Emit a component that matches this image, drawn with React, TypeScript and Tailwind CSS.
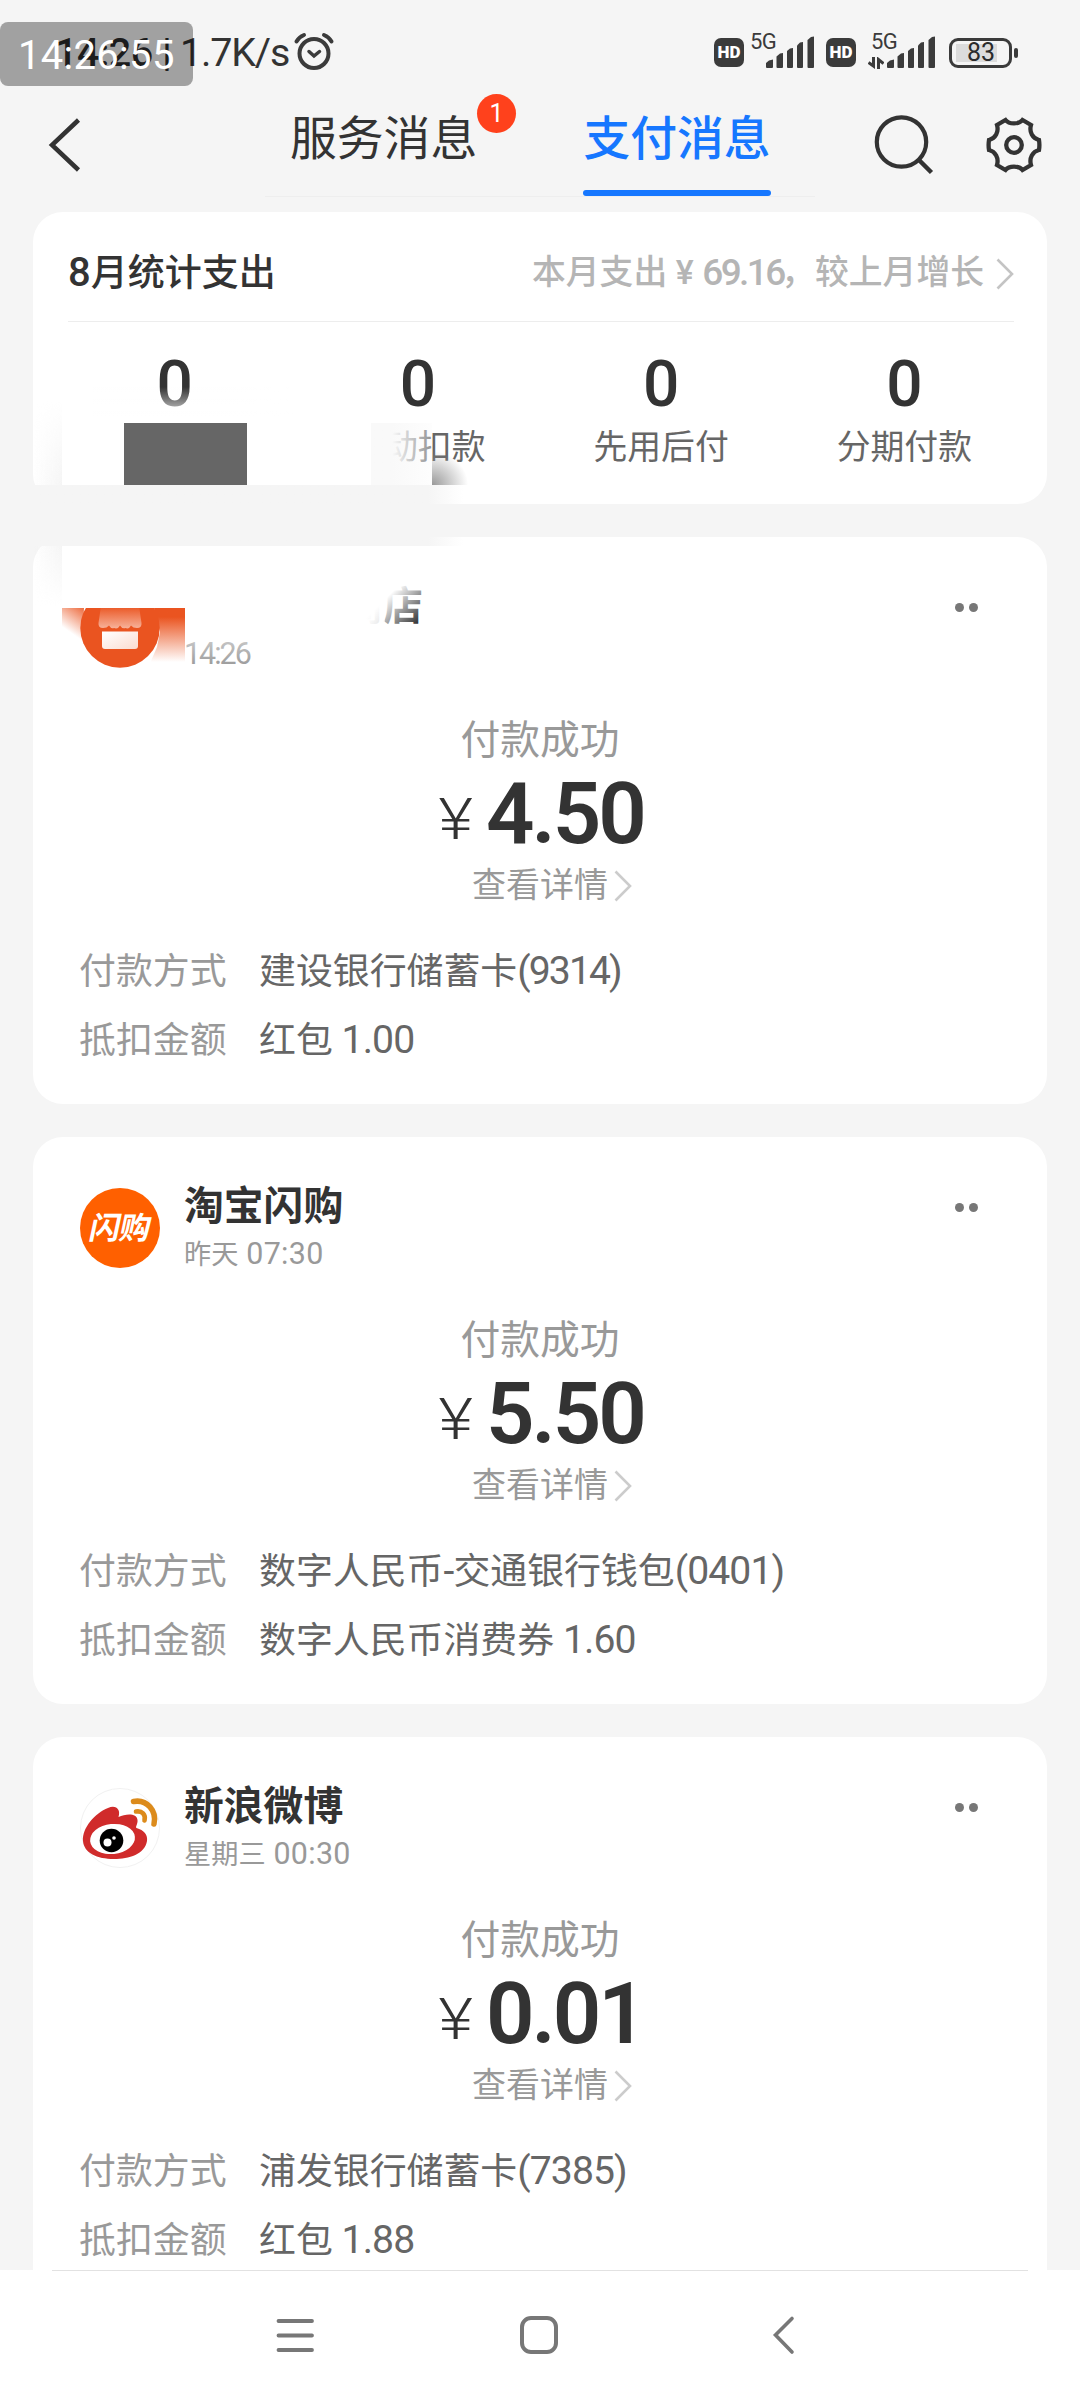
import React from "react";

const FONT = "font-['Roboto','Noto_Sans_CJK_SC',sans-serif]";

/* Splits a string into CJK and Latin runs so that the digits can be set a little larger. */
function Txt({ children, latin = "text-[1.08em]" }: { children: string; latin?: string }) {
  const runs = children.split(/([\x20-\x7e]+)/).filter(Boolean);
  return (
    <>
      {runs.map((r, i) =>
        /^[\x20-\x7e]+$/.test(r) ? (
          <span key={i} className={`${latin} whitespace-pre`}>{r}</span>
        ) : (
          <span key={i}>{r}</span>
        )
      )}
    </>
  );
}

function Signal() {
  return (
    <svg width="49" height="32" viewBox="0 0 49 32" className="block" fill="#3b3b3b">
      <path d="M0 31V27L3 24.5L7 23.5V31Q7 32 6 32H1Q0 32 0 31Z" />
      <path d="M10.5 31V20.5L14 17.5L17 17V31Q17 32 16 32H11.5Q10.5 32 10.5 31Z" />
      <path d="M21 31V15L24 12.5L27 12V31Q27 32 26 32H22Q21 32 21 31Z" />
      <path d="M31 31V9.500L34 6.500L37 6V31Q37 32 36 32H32Q31 32 31 31Z" />
      <path d="M41.500 31V4L45 1L48 .5V31Q48 32 47 32H42.500Q41.500 32 41.500 31Z" />
    </svg>
  );
}

function Hd() {
  return (
    <div className="flex h-[29px] w-[30px] items-center justify-center rounded-[7px] bg-[#3b3b3b] text-[17px] leading-none font-black text-white">
      HD
    </div>
  );
}

function StatusBar() {
  return (
    <div className="relative h-[90px] text-[#2b2b2b]">
      <div className="flex h-full items-start pl-[55px]">
        <div className="mt-[30px] w-[125px] text-[39.500px] leading-[46px] font-medium tracking-[-0.500px] whitespace-pre">14:26 |</div>
        <div className="mt-[30px] w-[113px] text-[39.500px] leading-[46px] tracking-[-1.200px] whitespace-pre text-[#333]">1.7K/s</div>
        <svg width="42" height="40" viewBox="0 0 42 40" className="mt-[31px]" fill="none" stroke="#3b3b3b" strokeLinecap="round">
          <circle cx="21" cy="22.500" r="14.500" strokeWidth="4" />
          <path d="M3.500 10.500Q6 6 11 4M31 4Q36 6 38.500 10.500" strokeWidth="4" />
          <path d="M16 20.500L21 25L26.500 20.500" strokeWidth="3.500" />
        </svg>
        <div className="mt-[38px] ml-[379px] flex">
          <Hd />
          <div className="-mt-[8px] ml-[6px] w-[16px] text-[22px] leading-[24px] tracking-[-0.500px] text-[#3b3b3b]">5G</div>
          <div className="-mt-[2px]"><Signal /></div>
          <div className="ml-[11px]"><Hd /></div>
          <div className="relative -mt-[8px] ml-[15px] w-[16px] text-[22px] leading-[24px] tracking-[-0.500px] text-[#3b3b3b]">
            5G
            <svg width="16" height="12" viewBox="0 0 16 12" className="absolute top-[27px] -left-[3px]" fill="none" stroke="#3b3b3b" strokeWidth="3">
              <path d="M0.500 5.500L5.500 9V0M10.500 12V2.500L15.500 6.500" />
            </svg>
          </div>
          <div className="-mt-[2px]"><Signal /></div>
          <div className="-mt-px ml-[13px] flex items-center">
            <div className="flex h-[30px] w-[63px] items-center rounded-[9px] border-[3px] border-[#3b3b3b] pl-[4px]">
              <div className="flex h-[18px] w-[41px] items-center justify-end bg-[#dcdcdc] pr-[2px] text-[25px] leading-none text-[#2b2b2b]">83</div>
            </div>
            <div className="ml-[2px] h-[10px] w-[4px] rounded-[2px] bg-[#3b3b3b]" />
          </div>
        </div>
      </div>
      <div className="absolute top-[22px] left-0 h-[64px] w-[193px] rounded-[8px] bg-black/34 pl-[18px] text-[40px] leading-[67px] tracking-[0.300px] text-white">
        14:26:55
      </div>
    </div>
  );
}

function Header() {
  return (
    <div className="flex h-[122px] items-start text-[46.800px] leading-[60px] text-[#333]">
      <svg width="40" height="60" viewBox="0 0 40 60" className="mt-[25px] ml-[44px]" fill="none" stroke="#333" strokeWidth="4.500">
        <path d="M34.500 5L8 30L34.500 55" />
      </svg>
      <div className="flex h-[107px] w-[550px] items-start border-b border-[#eee] ml-[181px]">
        <div className="relative mt-[19px] ml-[25px] w-[186px] whitespace-nowrap">
          服务消息
          <div className="absolute -top-[15px] left-[187px] flex h-[39px] w-[39px] items-center justify-center rounded-full bg-[#ff411c] text-[25px] leading-none text-white">1</div>
        </div>
        <div className="ml-[107px] h-[106px] w-[188px] pt-[19px] text-center font-medium whitespace-nowrap text-[#1677ff]">
          支付消息
          <div className="mt-[21px] h-[6px] rounded-full bg-[#1677ff]" />
        </div>
      </div>
      <svg width="64" height="64" viewBox="0 0 64 64" className="mt-[22px] ml-[56px]" fill="none" stroke="#333" strokeWidth="4.200">
        <circle cx="30.500" cy="30" r="24.700" />
        <path d="M47.500 47.500L60.500 60.500" strokeWidth="4.500" />
      </svg>
      <svg width="60" height="60" viewBox="-30 -30 60 60" className="mt-[25px] ml-[49px]" fill="none" stroke="#333" strokeWidth="4.300" strokeLinejoin="miter">
        <circle cx="0" cy="0" r="7.800" />
        <path d="M-8.500 -25C-5 -20.500 5 -20.500 8.500 -25L17 -20C15 -13 18.500 -6.500 25 -5Q25.800 0 25 5C18.500 6.500 15 13 17 20L8.500 25C5 20.500 -5 20.500 -8.500 25L-17 20C-15 13 -18.500 6.500 -25 5Q-25.800 0 -25 -5C-18.500 -6.500 -15 -13 -17 -20Z" />
      </svg>
    </div>
  );
}

function Chevron({ color }: { color: string }) {
  return (
    <svg width="18" height="32" viewBox="0 0 18 32" className="block" fill="none" stroke={color} strokeWidth="2.600">
      <path d="M1.500 1.500L16 16L1.500 30.500" />
    </svg>
  );
}

const STATS = ["", "自动扣款", "先用后付", "分期付款"];

function Summary() {
  return (
    <section className="relative mx-[33px] h-[292px] shrink-0 rounded-[30px] bg-white">
      <div className="mr-[33px] ml-[35px] flex h-[110px] items-center justify-between border-b border-[#ededed]">
        <div className="mt-[13px] text-[37px] leading-[48px] font-medium text-[#333]"><Txt>8月统计支出</Txt></div>
        <div className="mt-[13px] flex items-center text-[33.800px] leading-[44px] font-medium text-[#b5b5b5]">
          <span>本月支出</span>
          <span className="w-[35px] text-center">¥</span>
          <span className="w-[79px] text-[37px] tracking-[-2.600px]">69.16</span>
          <span>，较上月增长</span>
          <div className="mt-[2px] ml-[12px]"><Chevron color="#c4c4c4" /></div>
        </div>
      </div>
      <div className="ml-[20px] grid w-[973px] grid-cols-4 text-center">
        {STATS.map((s, i) => (
          <div key={i}>
            <div className="mt-[31px] text-[64px] leading-[64px] font-medium text-[#333]">0</div>
            <div className="mt-[9px] h-[44px] text-[33.800px] leading-[44px] text-[#666]">{s}</div>
          </div>
        ))}
      </div>
      {/* Redaction over the first two stats */}
      <div className="absolute top-[175px] left-[60px] h-[36px] w-[340px] bg-linear-to-b from-white/0 to-white [mask-image:linear-gradient(90deg,black_40%,transparent_60%)]" />
      <div className="absolute top-[180px] left-0 h-[93px] w-[29px] bg-linear-to-r from-white/0 to-[#f5f5f5] [mask-image:linear-gradient(180deg,transparent_10%,black)]" />
      <div className="absolute top-[211px] left-[29px] h-[62px] w-[309px] bg-white" />
      <div className="absolute top-[211px] left-[338px] h-[62px] w-[61px] bg-linear-to-r from-[#f9f9f9] from-35% to-[#f9f9f9]/30" />
      <div className="absolute top-[211px] left-[91px] h-[62px] w-[123px] bg-[#666]" />
      <div className="absolute top-[239px] left-[399px] h-[34px] w-[36px] bg-[radial-gradient(ellipse_farthest-side_at_0%_100%,#999_0%,rgba(255,255,255,0)_100%)]" />
      <div className="absolute top-[273px] left-0 h-[20px] w-[430px] bg-linear-to-r from-[#f5f5f5] from-92% to-[#f5f5f5]/0" />
    </section>
  );
}

type Payment = {
  icon: React.ReactNode;
  name: string;
  time: string;
  amount: string;
  method: string;
  discount: string;
  masked?: boolean;
};

function StoreIcon() {
  return (
    <svg width="80" height="80" viewBox="0 0 80 80" className="block">
      <defs>
        <linearGradient id="store" x1="0" y1="0" x2="0" y2="1">
          <stop offset="0" stopColor="#ea5420" />
          <stop offset="1" stopColor="#f7b29a" />
        </linearGradient>
        <linearGradient id="base" x1="0" y1="0" x2="1" y2="1">
          <stop offset="0" stopColor="#fff" />
          <stop offset="1" stopColor="#fbdcd0" />
        </linearGradient>
      </defs>
      <circle cx="40" cy="40" r="39.700" fill="#ea5420" />
      <path d="M21 18H59L61.500 35Q62 40 57 40Q53 40 51 37.500Q49 41.500 45.500 40Q42 41 40 37.500Q38 41.500 34 40Q31 41 29 37.500Q27 40 23 40Q18 40 18.500 35Z" fill="url(#store)" />
      <path d="M22 43.500H58V58Q58 61 55 61H25Q22 61 22 58Z" fill="url(#base)" />
    </svg>
  );
}

function FlashIcon() {
  return (
    <div className="flex h-[80px] w-[80px] items-center justify-center rounded-full bg-[#ff6000]">
      <span className="-skew-x-12 text-[31px] leading-none font-bold tracking-[-1px] text-white">闪购</span>
    </div>
  );
}

function WeiboIcon() {
  return (
    <svg width="80" height="80" viewBox="0 0 80 80" className="block">
      <circle cx="40" cy="40" r="39.500" fill="#fff" stroke="#f1f1f1" />
      <path d="M3 53C2 40 15 25 28 20C36 16.500 41 21.500 38.500 29C46 25.500 57 25 57.500 32C58 36 55 39 56.500 40C64 42 68 47 67 53C65 66 49 71 34 71C17 71 4 65 3 53Z" fill="#d02b2b" />
      <ellipse cx="32.500" cy="51" rx="22.500" ry="15" transform="rotate(-6 32.500 51)" fill="#fff" />
      <circle cx="31.500" cy="52.500" r="11.800" fill="#000" />
      <circle cx="27.500" cy="54.500" r="4" fill="#fff" />
      <circle cx="34" cy="50" r="1.800" fill="#fff" />
      <g fill="none" stroke="#dc8b1c" strokeLinecap="round">
        <path d="M53.500 13.500C67 11 77 23 74 36" strokeWidth="5.500" />
        <path d="M56 23.500C62 22.500 66 26.500 64.500 32.500" strokeWidth="4.600" />
      </g>
    </svg>
  );
}

function PaymentCard({ p }: { p: Payment }) {
  return (
    <section className="relative mx-[33px] h-[567px] shrink-0 rounded-[30px] bg-white px-[47px]">
      <div className="flex pt-[51px]">
        {p.icon}
        <div className="ml-[24px] flex-1">
          <div className="-mt-[7px] text-[39.800px] leading-[52px] font-semibold whitespace-pre text-[#333]">{p.name}</div>
          <div className="mt-px text-[27.200px] leading-[40px] text-[#999]">
            <Txt latin={p.masked ? "text-[1.12em] tracking-[-2px]" : "text-[1.12em] tracking-[0.300px]"}>{p.time}</Txt>
          </div>
        </div>
        <div className="mt-[15px] mr-[22px] flex gap-[5px]">
          <i className="h-[9px] w-[9px] rounded-full bg-[#777]" />
          <i className="h-[9px] w-[9px] rounded-full bg-[#777]" />
        </div>
      </div>
      <div className="absolute top-[177px] left-0 w-full text-center text-[39.800px] leading-[54px] text-[#999]">付款成功</div>
      <div className="absolute top-[237px] left-[402px] flex items-baseline text-[#333]">
        <span className="relative -top-[4px] w-[51px] origin-left scale-x-115 pl-[3px] text-[58px] leading-none font-light">¥</span>
        <span className="text-[85px] leading-[80px] font-semibold tracking-[-3px]">{p.amount}</span>
      </div>
      <div className="absolute top-[326px] left-[439px] flex items-center text-[34px] leading-[44px] text-[#999]">
        查看详情
        <span className="mt-px ml-[6px]"><Chevron color="#ccc" /></span>
      </div>
      <div className="absolute top-[400px] left-[46px] grid grid-cols-[180px_1fr] text-[36.900px] leading-[69px] whitespace-nowrap">
        <span className="text-[#999]">付款方式</span>
        <span className="text-[#666]"><Txt latin={p.masked ? "text-[1.06em] tracking-[-1.900px]" : "text-[1.06em] tracking-[-0.900px]"}>{p.method}</Txt></span>
        <span className="text-[#999]">抵扣金额</span>
        <span className="text-[#666]"><Txt latin="text-[1.06em] tracking-[-0.900px]">{p.discount}</Txt></span>
      </div>
      {p.masked && (
        <>
          {/* Redaction over the merchant's name */}
          <div className="absolute top-0 left-0 h-[9px] w-[430px] bg-linear-to-r from-[#f5f5f5] from-92% to-[#f5f5f5]/0" />
          <div className="absolute top-[9px] left-0 h-[60px] w-[29px] bg-linear-to-r from-white/0 to-[#f5f5f5] [mask-image:linear-gradient(180deg,black,transparent)]" />
          <div className="absolute top-[9px] left-[29px] h-[62px] w-[295px] bg-white" />
          <div className="absolute top-[45px] left-[300px] h-[50px] w-[94px] bg-[linear-gradient(135deg,white_48%,rgba(255,255,255,0)_88%)]" />
          <div className="absolute top-[45px] left-[300px] h-[50px] w-[52px] bg-linear-to-r from-white from-35% to-white/60" />
          <div className="absolute top-[71px] left-[29px] h-[45px] w-[30px] bg-[linear-gradient(215deg,#ea5420_0%,rgba(255,255,255,0)_60%)] [clip-path:polygon(0_0,22px_0,19px_100%,0_100%)]" />
          <div className="absolute top-[71px] left-[115px] h-[60px] w-[37px] bg-linear-to-b from-[#ea5420] from-15% to-[#ea5420]/0 to-90% [clip-path:polygon(6px_0,100%_0,100%_100%,0_100%,9px_65%,12px_40%)]" />
          <div className="absolute top-[100px] left-[152px] h-[30px] w-[70px] bg-linear-to-b from-white/50 to-white/0" />
        </>
      )}
    </section>
  );
}

const PAYMENTS: Payment[] = [
  { icon: <StoreIcon />, name: "\u3000\u3000\u3000\u3000商店", time: "14:26", amount: "4.50", method: "建设银行储蓄卡(9314)", discount: "红包 1.00", masked: true },
  { icon: <FlashIcon />, name: "淘宝闪购", time: "昨天 07:30", amount: "5.50", method: "数字人民币-交通银行钱包(0401)", discount: "数字人民币消费券 1.60" },
  { icon: <WeiboIcon />, name: "新浪微博", time: "星期三 00:30", amount: "0.01", method: "浦发银行储蓄卡(7385)", discount: "红包 1.88" },
];

function NavBar() {
  return (
    <nav className="h-[130px] shrink-0 bg-white px-[52px]">
      <div className="flex h-full items-start border-t border-[#e2e2e2] pt-[44px]">
        <svg width="40" height="40" viewBox="0 0 40 40" className="ml-[223px]" stroke="#777" strokeWidth="3.800" strokeLinecap="round">
          <path d="M3.500 6H37M3.500 20.500H37M3.500 35H37" />
        </svg>
        <div className="mt-[1px] ml-[205px] h-[38px] w-[38px] rounded-[11px] border-4 border-[#777]" />
        <svg width="26" height="40" viewBox="0 0 26 40" className="ml-[213px]" fill="none" stroke="#777" strokeWidth="3.600" strokeLinecap="round">
          <path d="M21 3.500L4.500 20L21 37" />
        </svg>
      </div>
    </nav>
  );
}

export default function App() {
  return (
    <div className={`${FONT} flex h-[2400px] w-[1080px] flex-col overflow-hidden bg-[#f5f5f5]`}>
      <StatusBar />
      <Header />
      <main className="flex h-[2058px] shrink-0 flex-col gap-[33px] overflow-hidden">
        <Summary />
        {PAYMENTS.map((p) => (
          <PaymentCard key={p.name} p={p} />
        ))}
      </main>
      <NavBar />
    </div>
  );
}
